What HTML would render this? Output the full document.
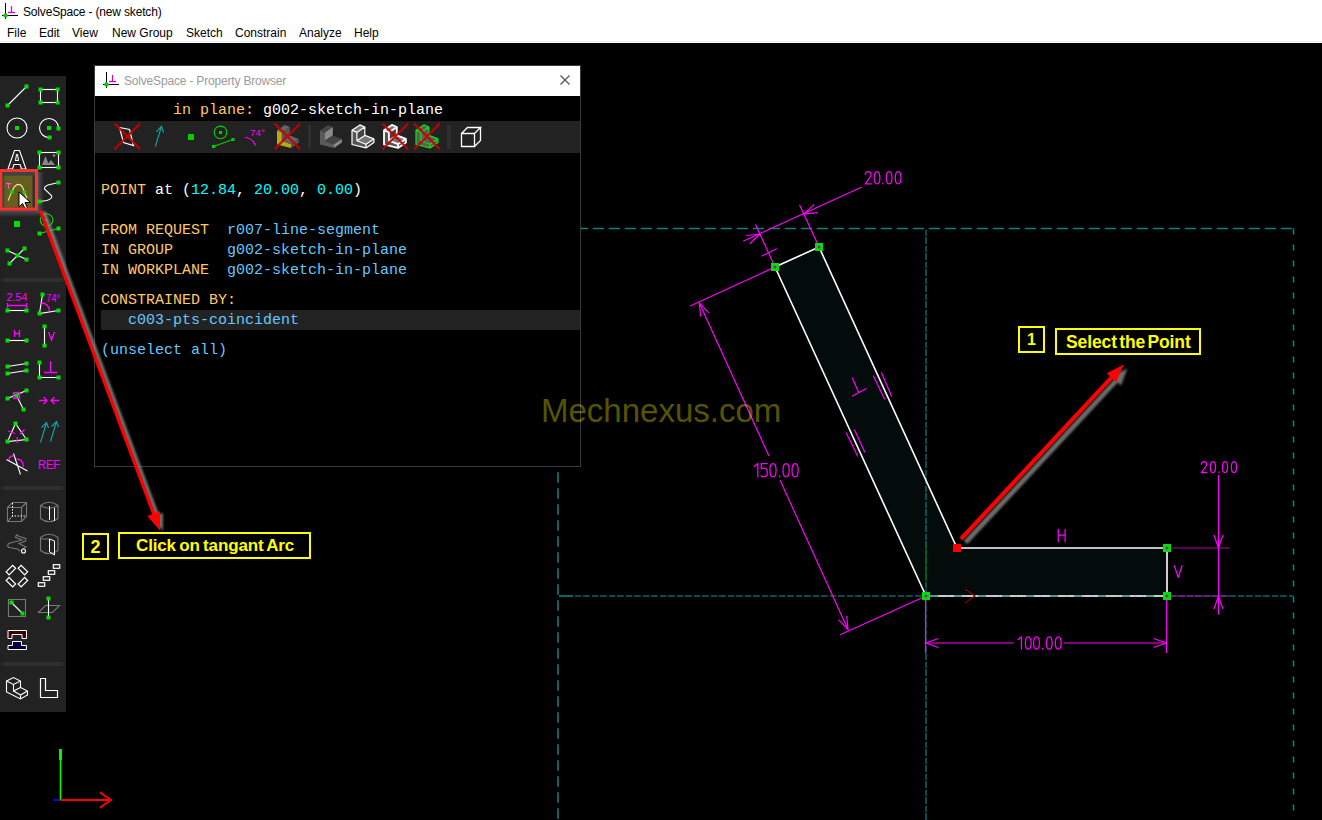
<!DOCTYPE html>
<html><head><meta charset="utf-8">
<style>
html,body{margin:0;padding:0;width:1322px;height:820px;overflow:hidden;background:#000;position:relative;font-family:"Liberation Sans",sans-serif}
.abs{position:absolute}
.menu{position:absolute;top:26px;font-size:12px;color:#000;line-height:14px;white-space:nowrap}
.mono{position:absolute;left:6px;font-family:"Liberation Mono",monospace;font-size:15px;line-height:20px;white-space:pre;color:#fff}
.y{color:#ffc864}.c{color:#00ffff}.l{color:#64c8ff}
svg{position:absolute;overflow:visible}
</style></head><body>

<div class="abs" style="left:0;top:0;width:1322px;height:43px;background:#fff"></div>
<div class="abs" style="left:0;top:41px;width:1322px;height:1px;background:#f0f0f0"></div>
<svg style="left:0px;top:0px" width="20" height="20">
  <line x1="5.5" y1="3" x2="5.5" y2="19" stroke="#000" stroke-width="1"/>
  <line x1="2" y1="15.5" x2="18" y2="15.5" stroke="#000" stroke-width="1"/>
  <line x1="11.5" y1="6" x2="11.5" y2="12" stroke="#d800d8" stroke-width="1.2"/>
  <line x1="8" y1="12.5" x2="15" y2="12.5" stroke="#d800d8" stroke-width="1.4"/>
  <circle cx="5.5" cy="15.5" r="2.2" fill="#00d000"/>
</svg>
<div class="abs" style="left:23px;top:5px;letter-spacing:-0.17px;font-size:12px;line-height:14px;color:#000;white-space:nowrap">SolveSpace - (new sketch)</div>
<div class="menu" style="left:7px">File</div>
<div class="menu" style="left:39px">Edit</div>
<div class="menu" style="left:72px">View</div>
<div class="menu" style="left:112px">New Group</div>
<div class="menu" style="left:186px">Sketch</div>
<div class="menu" style="left:235px">Constrain</div>
<div class="menu" style="left:299px">Analyze</div>
<div class="menu" style="left:354px">Help</div>
<svg style="left:0;top:0" width="1322" height="820">
<polygon points="775,267 819,247 957,548 1167,548 1167,596 926,596" fill="#030b0b"/>
<g stroke="#0e7f7f" fill="none">
<line x1="576.8" y1="228.5" x2="1293.5" y2="228.5" stroke-width="1.6" stroke-dasharray="11.2 4.8"/>
<line x1="1293.5" y1="228.5" x2="1293.5" y2="820" stroke-width="1.6" stroke-dasharray="6 10"/>
<line x1="558" y1="472.3" x2="558" y2="820" stroke-width="1.6" stroke-dasharray="10.5 5.5"/>
<line x1="926" y1="229.8" x2="926" y2="820" stroke-width="1.2" stroke-dasharray="6.3 1 6.8 1.9"/>
<line x1="559" y1="596" x2="573" y2="596" stroke-width="1.6"/>
<line x1="575" y1="596" x2="1293.5" y2="596" stroke-width="1.3" stroke-dasharray="6.3 1.7 6.8 2.2" stroke-opacity="0.8"/>
</g>
<polyline points="926,596 775,267 819,247 957,548 1167,548 1167,596" fill="none" stroke="#fff" stroke-width="1.6"/>
<line x1="926" y1="596" x2="1167" y2="596" stroke="#fff" stroke-width="1.6"/>
<line x1="926" y1="596" x2="1167" y2="596" stroke="#4d9a9a" stroke-width="1.8" stroke-dasharray="8 16" stroke-dashoffset="-4"/>
<line x1="926" y1="545" x2="926" y2="581" stroke="#006400" stroke-width="1.2"/>
<polyline points="965,589 975,596 965,603" fill="none" stroke="#8a0000" stroke-width="1.2"/>
<g stroke="#ff00ff" stroke-width="1.2" fill="none">
<line x1="755.4" y1="224.2" x2="775" y2="267"/>
<line x1="799.5" y1="204.7" x2="819" y2="247"/>
<line x1="743.2" y1="241.2" x2="861.8" y2="187"/>
<polyline points="749.8,243.7 759.8,234.2 746.1,235.5"/>
<polyline points="814.2,204.4 804.2,213.9 817.9,212.6"/>
<line x1="761.4" y1="256.2" x2="776.8" y2="248.8"/>
<line x1="775" y1="267" x2="690.2" y2="306"/>
<line x1="926" y1="596" x2="840" y2="634.8"/>
<line x1="699.3" y1="302.8" x2="768.9" y2="455.8"/>
<line x1="780" y1="480" x2="848" y2="629.6"/>
<polyline points="708.8,312.8 699.3,302.8 700.6,316.5"/>
<polyline points="838.5,619.6 848.0,629.6 846.7,615.9"/>
<line x1="925.5" y1="596" x2="925.5" y2="653"/>
<line x1="1166.5" y1="596" x2="1166.5" y2="653"/>
<line x1="925.5" y1="643" x2="1014" y2="643"/>
<line x1="1064" y1="643" x2="1166.5" y2="643"/>
<polyline points="938.5,638.5 925.5,643.0 938.5,647.5"/>
<polyline points="1153.5,647.5 1166.5,643.0 1153.5,638.5"/>
<line x1="1167" y1="548" x2="1229" y2="548" stroke="#b000b0"/>
<line x1="1167" y1="596" x2="1229" y2="596" stroke="#b000b0"/>
<line x1="1218.5" y1="475" x2="1218.5" y2="614.5"/>
<polyline points="1214.0,535.0 1218.5,548.0 1223.0,535.0"/>
<polyline points="1223.0,609.0 1218.5,596.0 1214.0,609.0"/>
<line x1="852.1" y1="377.4" x2="858.6" y2="392.2"/>
<line x1="852.1" y1="396.2" x2="866.6" y2="388.5"/>
<line x1="873.2" y1="375.4" x2="884.8" y2="399.6"/>
<line x1="881.3" y1="372.3" x2="891.7" y2="396.5"/>
<line x1="846.1" y1="432.5" x2="857.8" y2="456.4"/>
<line x1="854.4" y1="429.5" x2="864.9" y2="452.6"/>
</g>
<g stroke="#ff00ff" stroke-width="1.25" fill="none" stroke-linecap="round" stroke-linejoin="round"><path d="M0,3 C0.3,1.2 1.6,0 3.2,0 C5,0 6.2,1.3 6.2,3.3 C6.2,5.2 4.8,6.6 0,13 L6.4,13" transform="translate(865.20,171.60) scale(0.9462)" vector-effect="non-scaling-stroke"/><path d="M3,0 C1.1,0 0,2.8 0,6.5 C0,10.2 1.1,13 3,13 C4.9,13 6,10.2 6,6.5 C6,2.8 4.9,0 3,0 Z" transform="translate(874.20,171.60) scale(0.9462)" vector-effect="non-scaling-stroke"/><path d="M0.6,12.1 L0.6,13" transform="translate(882.30,171.60) scale(0.9462)" vector-effect="non-scaling-stroke"/><path d="M3,0 C1.1,0 0,2.8 0,6.5 C0,10.2 1.1,13 3,13 C4.9,13 6,10.2 6,6.5 C6,2.8 4.9,0 3,0 Z" transform="translate(886.30,171.60) scale(0.9462)" vector-effect="non-scaling-stroke"/><path d="M3,0 C1.1,0 0,2.8 0,6.5 C0,10.2 1.1,13 3,13 C4.9,13 6,10.2 6,6.5 C6,2.8 4.9,0 3,0 Z" transform="translate(895.30,171.60) scale(0.9462)" vector-effect="non-scaling-stroke"/></g>
<g stroke="#ff00ff" stroke-width="1.25" fill="none" stroke-linecap="round" stroke-linejoin="round"><path d="M0,2.9 L3.4,0 L3.4,13" transform="translate(1018.20,636.80) scale(0.9538)" vector-effect="non-scaling-stroke"/><path d="M3,0 C1.1,0 0,2.8 0,6.5 C0,10.2 1.1,13 3,13 C4.9,13 6,10.2 6,6.5 C6,2.8 4.9,0 3,0 Z" transform="translate(1025.40,636.80) scale(0.9538)" vector-effect="non-scaling-stroke"/><path d="M3,0 C1.1,0 0,2.8 0,6.5 C0,10.2 1.1,13 3,13 C4.9,13 6,10.2 6,6.5 C6,2.8 4.9,0 3,0 Z" transform="translate(1033.60,636.80) scale(0.9538)" vector-effect="non-scaling-stroke"/><path d="M0.6,12.1 L0.6,13" transform="translate(1042.10,636.80) scale(0.9538)" vector-effect="non-scaling-stroke"/><path d="M3,0 C1.1,0 0,2.8 0,6.5 C0,10.2 1.1,13 3,13 C4.9,13 6,10.2 6,6.5 C6,2.8 4.9,0 3,0 Z" transform="translate(1046.40,636.80) scale(0.9538)" vector-effect="non-scaling-stroke"/><path d="M3,0 C1.1,0 0,2.8 0,6.5 C0,10.2 1.1,13 3,13 C4.9,13 6,10.2 6,6.5 C6,2.8 4.9,0 3,0 Z" transform="translate(1055.40,636.80) scale(0.9538)" vector-effect="non-scaling-stroke"/></g>
<g stroke="#ff00ff" stroke-width="1.25" fill="none" stroke-linecap="round" stroke-linejoin="round"><path d="M0,2.9 L3.4,0 L3.4,13" transform="translate(754.30,463.50) scale(1.0308)" vector-effect="non-scaling-stroke"/><path d="M6,0 L0.3,0 L0.3,5.1 C1.3,4.6 2.4,4.4 3.3,4.5 C5,4.8 6.1,6.3 6.1,8.6 C6.1,11.3 4.6,13 2.8,13 C1.7,13 0.7,12.6 0,12.1" transform="translate(761.00,463.50) scale(1.0308)" vector-effect="non-scaling-stroke"/><path d="M3,0 C1.1,0 0,2.8 0,6.5 C0,10.2 1.1,13 3,13 C4.9,13 6,10.2 6,6.5 C6,2.8 4.9,0 3,0 Z" transform="translate(769.90,463.50) scale(1.0308)" vector-effect="non-scaling-stroke"/><path d="M0.6,12.1 L0.6,13" transform="translate(779.00,463.50) scale(1.0308)" vector-effect="non-scaling-stroke"/><path d="M3,0 C1.1,0 0,2.8 0,6.5 C0,10.2 1.1,13 3,13 C4.9,13 6,10.2 6,6.5 C6,2.8 4.9,0 3,0 Z" transform="translate(783.00,463.50) scale(1.0308)" vector-effect="non-scaling-stroke"/><path d="M3,0 C1.1,0 0,2.8 0,6.5 C0,10.2 1.1,13 3,13 C4.9,13 6,10.2 6,6.5 C6,2.8 4.9,0 3,0 Z" transform="translate(792.00,463.50) scale(1.0308)" vector-effect="non-scaling-stroke"/></g>
<g stroke="#ff00ff" stroke-width="1.25" fill="none" stroke-linecap="round" stroke-linejoin="round"><path d="M0,3 C0.3,1.2 1.6,0 3.2,0 C5,0 6.2,1.3 6.2,3.3 C6.2,5.2 4.8,6.6 0,13 L6.4,13" transform="translate(1201.30,461.50) scale(0.8615)" vector-effect="non-scaling-stroke"/><path d="M3,0 C1.1,0 0,2.8 0,6.5 C0,10.2 1.1,13 3,13 C4.9,13 6,10.2 6,6.5 C6,2.8 4.9,0 3,0 Z" transform="translate(1210.30,461.50) scale(0.8615)" vector-effect="non-scaling-stroke"/><path d="M0.6,12.1 L0.6,13" transform="translate(1218.50,461.50) scale(0.8615)" vector-effect="non-scaling-stroke"/><path d="M3,0 C1.1,0 0,2.8 0,6.5 C0,10.2 1.1,13 3,13 C4.9,13 6,10.2 6,6.5 C6,2.8 4.9,0 3,0 Z" transform="translate(1222.40,461.50) scale(0.8615)" vector-effect="non-scaling-stroke"/><path d="M3,0 C1.1,0 0,2.8 0,6.5 C0,10.2 1.1,13 3,13 C4.9,13 6,10.2 6,6.5 C6,2.8 4.9,0 3,0 Z" transform="translate(1231.40,461.50) scale(0.8615)" vector-effect="non-scaling-stroke"/></g>
<g stroke="#ff00ff" stroke-width="1.25" fill="none" stroke-linecap="round" stroke-linejoin="round"><path d="M0.5,0 L0.5,13 M7.8,0 L7.8,13 M0.5,6.2 L7.8,6.2" transform="translate(1057.80,529.30) scale(0.9385)" vector-effect="non-scaling-stroke"/></g>
<g stroke="#ff00ff" stroke-width="1.25" fill="none" stroke-linecap="round" stroke-linejoin="round"><path d="M0,0 L4.3,13 L8.6,0" transform="translate(1174.40,565.80) scale(0.8923)" vector-effect="non-scaling-stroke"/></g>
<rect x="771.0" y="263.0" width="8" height="8" fill="#00e000"/>
<circle cx="775" cy="267" r="1.5" fill="#9a209a"/>
<rect x="815.0" y="243.0" width="8" height="8" fill="#00e000"/>
<circle cx="819" cy="247" r="1.5" fill="#9a209a"/>
<rect x="922.0" y="592.0" width="8" height="8" fill="#00e000"/>
<circle cx="926" cy="596" r="1.5" fill="#9a209a"/>
<rect x="1163.0" y="544.0" width="8" height="8" fill="#00e000"/>
<circle cx="1167" cy="548" r="1.5" fill="#9a209a"/>
<rect x="1163.0" y="592.0" width="8" height="8" fill="#00e000"/>
<circle cx="1167" cy="596" r="1.5" fill="#9a209a"/>
<rect x="953.0" y="544.0" width="8" height="8" fill="#ff0000"/>
</svg>
<div class="abs" style="left:94px;top:65px;width:485px;height:400px;border:1px solid #3a3a3a;background:#000"></div>
<div class="abs" style="left:95px;top:66px;width:485px;height:30px;background:#fff"></div>
<svg style="left:101px;top:69px" width="20" height="20">
  <line x1="5.5" y1="3" x2="5.5" y2="19" stroke="#000" stroke-width="1"/>
  <line x1="2" y1="15.5" x2="18" y2="15.5" stroke="#000" stroke-width="1"/>
  <line x1="11.5" y1="6" x2="11.5" y2="12" stroke="#d800d8" stroke-width="1.2"/>
  <line x1="8" y1="12.5" x2="15" y2="12.5" stroke="#d800d8" stroke-width="1.4"/>
  <circle cx="5.5" cy="15.5" r="2.2" fill="#00d000"/>
</svg>
<div class="abs" style="left:124px;top:74px;letter-spacing:-0.18px;font-size:12px;line-height:14px;color:#9a9a9a;white-space:nowrap">SolveSpace - Property Browser</div>
<svg style="left:0;top:0" width="1322" height="820">
<g stroke="#555" stroke-width="1.2" fill="none"><line x1="560.5" y1="75.5" x2="569.5" y2="84.5"/><line x1="569.5" y1="75.5" x2="560.5" y2="84.5"/></g>
</svg>
<div class="abs" style="left:95px;top:96px;width:485px;height:370px;overflow:hidden">
<div class="mono" style="top:5px"><span class="y">        in plane: </span>g002-sketch-in-plane</div>
<div class="abs" style="left:0;top:25px;width:485px;height:32px;background:#222"></div>
<div class="mono" style="top:85px"><span class="y">POINT</span> at (<span class="c">12.84</span>, <span class="c">20.00</span>, <span class="c">0.00</span>)</div>
<div class="mono" style="top:125px"><span class="y">FROM REQUEST  </span><span class="l">r007-line-segment</span></div>
<div class="mono" style="top:145px"><span class="y">IN GROUP      </span><span class="l">g002-sketch-in-plane</span></div>
<div class="mono" style="top:165px"><span class="y">IN WORKPLANE  </span><span class="l">g002-sketch-in-plane</span></div>
<div class="mono" style="top:195px"><span class="y">CONSTRAINED BY:</span></div>
<div class="abs" style="left:6px;top:214px;width:479px;height:20px;background:#222"></div>
<div class="mono" style="top:215px"><span class="l">   c003-pts-coincident</span></div>
<div class="mono" style="top:245px"><span class="l">(unselect all)</span></div>
</div>
<svg style="left:0;top:0" width="1322" height="820">
<polygon points="119.5,127.5 129.5,129.5 133.5,145.5 123.5,142.5" fill="none" stroke="#fff" stroke-width="1.2"/>
<path d="M114.60000000000001,123.50000000000001 L140.20000000000002,149.10000000000002 M114.60000000000001,149.10000000000002 L140.20000000000002,123.50000000000001" stroke="#c80000" stroke-width="2.2" opacity="0.9" fill="none"/>
<path d="M155.3,146.6 L161.4,126.3 M156.3,131.8 L161.4,126.3 L163.6,132.5" stroke="#10a0a0" stroke-width="1.2" fill="none"/>
<rect x="188" y="134" width="6" height="6" fill="#00d000"/>
<circle cx="220.5" cy="132.4" r="6.3" stroke="#00d000" stroke-width="1.1" fill="none"/><rect x="219" y="131" width="3" height="3" fill="#00d000"/>
<line x1="213.3" y1="146.4" x2="233" y2="139.4" stroke="#00d000" stroke-width="1.1"/><rect x="212" y="145" width="3" height="3" fill="#00d000"/><rect x="231.5" y="138" width="3" height="3" fill="#00d000"/>
<text x="250" y="135.8" font-family="Liberation Sans" font-size="9.5" fill="#ff00ff" textLength="15" lengthAdjust="spacingAndGlyphs">74°</text>
<path d="M245,137.3 Q252,138 255.7,145.6" stroke="#ff00ff" stroke-width="1.1" fill="none"/>
<polygon points="277.0,130.2 281.9,132.4 281.9,140.7 291.0,144.2 291.0,147.9 277.0,144.5" fill="#b8aa10"/><polygon points="277.0,130.2 284.9,124.9 289.8,127.1 281.9,132.4" fill="#666"/><polygon points="281.9,132.4 289.8,127.1 289.8,135.4 281.9,140.7" fill="#555"/><polygon points="281.9,140.7 289.8,135.4 298.9,138.9 291.0,144.2" fill="#666"/><polygon points="291.0,144.2 298.9,138.9 298.9,142.6 291.0,147.9" fill="#555"/>
<path d="M274.59999999999997,123.50000000000001 L300.2,149.10000000000002 M274.59999999999997,149.10000000000002 L300.2,123.50000000000001" stroke="#c80000" stroke-width="2.2" opacity="0.9" fill="none"/>
<rect x="308" y="125" width="3" height="24" fill="#2e2e2e"/>
<polygon points="320.0,130.2 324.9,132.4 324.9,140.7 334.0,144.2 334.0,147.9 320.0,144.5" fill="#5a5a5a"/><polygon points="320.0,130.2 327.9,124.9 332.8,127.1 324.9,132.4" fill="#444"/><polygon points="324.9,132.4 332.8,127.1 332.8,135.4 324.9,140.7" fill="#8a8a8a"/><polygon points="324.9,140.7 332.8,135.4 341.9,138.9 334.0,144.2" fill="#444"/><polygon points="334.0,144.2 341.9,138.9 341.9,142.6 334.0,147.9" fill="#8a8a8a"/>
<polygon points="352.0,130.2 356.9,132.4 356.9,140.7 366.0,144.2 366.0,147.9 352.0,144.5" fill="#555"/><polygon points="352.0,130.2 359.9,124.9 364.8,127.1 356.9,132.4" fill="#777"/><polygon points="356.9,132.4 364.8,127.1 364.8,135.4 356.9,140.7" fill="#444"/><polygon points="356.9,140.7 364.8,135.4 373.9,138.9 366.0,144.2" fill="#777"/><polygon points="366.0,144.2 373.9,138.9 373.9,142.6 366.0,147.9" fill="#444"/><path d="M352.0,130.2 L359.9,124.9 L364.8,127.1 L364.8,135.4 L373.9,138.9 L373.9,142.6 L366.0,147.9 L352.0,144.5 Z M364.8,127.1 L356.9,132.4 M364.8,135.4 L356.9,140.7 M373.9,138.9 L366.0,144.2 M352.0,130.2 L356.9,132.4 L356.9,140.7 L366.0,144.2 L366.0,147.9" stroke="#fff" stroke-width="1.2" fill="none" stroke-linejoin="round"/>
<polygon points="384.0,130.2 388.9,132.4 388.9,140.7 398.0,144.2 398.0,147.9 384.0,144.5" fill="#555"/><polygon points="384.0,130.2 391.9,124.9 396.8,127.1 388.9,132.4" fill="#777"/><polygon points="388.9,132.4 396.8,127.1 396.8,135.4 388.9,140.7" fill="#444"/><polygon points="388.9,140.7 396.8,135.4 405.9,138.9 398.0,144.2" fill="#777"/><polygon points="398.0,144.2 405.9,138.9 405.9,142.6 398.0,147.9" fill="#444"/><path d="M384.0,130.2 L391.9,124.9 L396.8,127.1 L396.8,135.4 L405.9,138.9 L405.9,142.6 L398.0,147.9 L384.0,144.5 Z M396.8,127.1 L388.9,132.4 M396.8,135.4 L388.9,140.7 M405.9,138.9 L398.0,144.2 M384.0,130.2 L388.9,132.4 L388.9,140.7 L398.0,144.2 L398.0,147.9" stroke="#fff" stroke-width="1.8" fill="none" stroke-linejoin="round"/>
<path d="M382.5,123.60000000000001 L408.1,149.20000000000002 M382.5,149.20000000000002 L408.1,123.60000000000001" stroke="#c80000" stroke-width="2.2" opacity="0.9" fill="none"/>
<polygon points="416.0,130.2 420.9,132.4 420.9,140.7 430.0,144.2 430.0,147.9 416.0,144.5" fill="#665566"/><polygon points="416.0,130.2 423.9,124.9 428.8,127.1 420.9,132.4" fill="#665566"/><polygon points="420.9,132.4 428.8,127.1 428.8,135.4 420.9,140.7" fill="#665566"/><polygon points="420.9,140.7 428.8,135.4 437.9,138.9 430.0,144.2" fill="#665566"/><polygon points="430.0,144.2 437.9,138.9 437.9,142.6 430.0,147.9" fill="#665566"/><path d="M416.0,130.2 L423.9,124.9 L428.8,127.1 L428.8,135.4 L437.9,138.9 L437.9,142.6 L430.0,147.9 L416.0,144.5 Z M428.8,127.1 L420.9,132.4 M428.8,135.4 L420.9,140.7 M437.9,138.9 L430.0,144.2 M416.0,130.2 L420.9,132.4 L420.9,140.7 L430.0,144.2 L430.0,147.9" stroke="#00ee00" stroke-width="1.2" fill="none" stroke-linejoin="round"/>
<path d="M414.2,123.60000000000001 L439.8,149.20000000000002 M414.2,149.20000000000002 L439.8,123.60000000000001" stroke="#c80000" stroke-width="2.2" opacity="0.9" fill="none"/>
<rect x="447" y="125" width="4" height="24" fill="#2e2e2e"/>
<path d="M461.5,133.5 L474.5,133.5 L474.5,146.5 L461.5,146.5 Z M461.5,133.5 L467.5,127.5 L480.5,127.5 L474.5,133.5 M480.5,127.5 L480.5,140.5 L474.5,146.5" stroke="#fff" stroke-width="1.3" fill="none"/>
</svg>
<div class="abs" style="left:0;top:76px;width:66px;height:636px;background:#222"></div>
<div class="abs" style="left:3px;top:278px;width:60px;height:4px;background:#2f2f2f"></div>
<div class="abs" style="left:3px;top:486px;width:60px;height:4px;background:#2f2f2f"></div>
<div class="abs" style="left:3px;top:662px;width:60px;height:4px;background:#2f2f2f"></div>
<svg style="left:0;top:0" width="1322" height="820">
<line x1="7.5" y1="105.5" x2="26.5" y2="86.5" stroke="#fff" stroke-width="1.1" fill="none"/><rect x="5.5" y="103.5" width="4" height="4" fill="#00e000"/><rect x="24.5" y="84.5" width="4" height="4" fill="#00e000"/>
<rect x="40.5" y="89.5" width="17" height="13" stroke="#fff" stroke-width="1.1" fill="none"/><rect x="38.5" y="87.5" width="4" height="4" fill="#00e000"/><rect x="55.5" y="87.5" width="4" height="4" fill="#00e000"/><rect x="38.5" y="100.5" width="4" height="4" fill="#00e000"/><rect x="55.5" y="100.5" width="4" height="4" fill="#00e000"/>
<circle cx="17" cy="128" r="10" stroke="#fff" stroke-width="1.1" fill="none"/><rect x="15.0" y="126.0" width="4" height="4" fill="#00e000"/>
<path d="M58.5,128 A9.5,9.5 0 1 0 49.5,137.5" stroke="#fff" stroke-width="1.1" fill="none"/><rect x="47.0" y="126.0" width="4" height="4" fill="#00e000"/><rect x="56.5" y="126.5" width="4" height="4" fill="#00e000"/><rect x="47.5" y="135.5" width="4" height="4" fill="#00e000"/>
<path d="M8,169 L14.5,150.5 L19.5,150.5 L26,169 L21.5,169 L20,164.5 L14,164.5 L12.5,169 Z M15.5,160.5 L18.5,160.5 L17.5,154.5 L16.5,154.5 Z" stroke="#fff" stroke-width="1.1" fill="none" stroke-linejoin="round"/>
<rect x="39.5" y="152.5" width="19" height="15" stroke="#fff" stroke-width="1.1" fill="none"/><path d="M42,165 L45.5,156 L49,165 Z M47,165 L51,160 L55,165 Z" fill="#888"/><circle cx="54" cy="155.5" r="1.3" fill="#888"/><rect x="37.5" y="150.5" width="4" height="4" fill="#00e000"/><rect x="56.5" y="150.5" width="4" height="4" fill="#00e000"/><rect x="37.5" y="165.5" width="4" height="4" fill="#00e000"/><rect x="56.5" y="165.5" width="4" height="4" fill="#00e000"/>
<defs><linearGradient id="shr" x1="0" y1="0" x2="1" y2="0"><stop offset="0" stop-color="#4a5050"/><stop offset="1" stop-color="#222"/></linearGradient><linearGradient id="shb" x1="0" y1="0" x2="0" y2="1"><stop offset="0" stop-color="#4a5050"/><stop offset="1" stop-color="#222"/></linearGradient></defs>
<rect x="38" y="172" width="6" height="44" fill="url(#shr)"/>
<rect x="0" y="211" width="44" height="6" fill="url(#shb)"/>
<rect x="2" y="172" width="33" height="36" fill="#2c3131"/>
<rect x="2" y="172" width="33" height="3.5" fill="#3c4343"/>
<rect x="4" y="175.5" width="28.5" height="32" fill="#655e1e"/>
<rect x="2" y="175.5" width="2.5" height="32" fill="#444a3a"/>
<path d="M8.2,200.6 Q10,195 12,191.7 Q14.5,184.4 18.4,184.4 Q22.5,184.4 24.4,192.3 Q26,196 27,198.3" stroke="#f0eca0" stroke-width="1.1" fill="none"/>
<path d="M6,183.6 L11.1,183.6 M8.55,183.6 L8.55,188.8" stroke="#ff55bb" stroke-width="1.1" fill="none"/>
<rect x="10.35" y="190.04999999999998" width="3.3" height="3.3" fill="#00e000"/><rect x="22.75" y="190.65" width="3.3" height="3.3" fill="#00e000"/>
<path d="M19,192 L19,207 L22.5,203.5 L25.3,209 L27.5,208 L25,202.5 L30.5,202.5 Z" fill="#fff" stroke="#000" stroke-width="1"/>
<path d="M0,168.9 L38,168.9 L38,210.7 L0,210.7 Z M2.2,172 L2.2,207.5 L34.9,207.5 L34.9,172 Z" fill="#ff3030" fill-rule="evenodd"/>
<path d="M39.5,201.5 L47,200.5 Q53,198.5 51.5,195.5 L44.5,189 Q44,186.5 48,185 L58.5,182.5" stroke="#fff" stroke-width="1.1" fill="none"/><rect x="37.5" y="199.5" width="4" height="4" fill="#00e000"/><rect x="56.5" y="180.5" width="4" height="4" fill="#00e000"/>
<rect x="14.0" y="221.0" width="6" height="6" fill="#00e000"/>
<circle cx="46.5" cy="220" r="6.3" stroke="#00e000" stroke-width="1.1" fill="none"/><rect x="45.5" y="219.0" width="2" height="2" fill="#00e000"/><line x1="39.5" y1="233.5" x2="58.5" y2="228.5" stroke="#00e000" stroke-width="1.1"/><rect x="37.5" y="231.5" width="4" height="4" fill="#00e000"/><rect x="56.5" y="226.5" width="4" height="4" fill="#00e000"/>
<line x1="7.5" y1="250.5" x2="26.5" y2="259.5" stroke="#fff" stroke-width="1.1" fill="none"/><line x1="9.5" y1="263.5" x2="24.5" y2="248.5" stroke="#fff" stroke-width="1.1" fill="none"/><rect x="5.5" y="248.5" width="4" height="4" fill="#00e000"/><rect x="24.5" y="257.5" width="4" height="4" fill="#00e000"/><rect x="7.5" y="261.5" width="4" height="4" fill="#00e000"/><rect x="22.5" y="246.5" width="4" height="4" fill="#00e000"/><rect x="15.5" y="253.5" width="4" height="4" fill="#00e000"/>
<line x1="7.5" y1="310.5" x2="26.5" y2="310.5" stroke="#fff" stroke-width="1.1" fill="none"/><rect x="5.5" y="308.5" width="4" height="4" fill="#00e000"/><rect x="24.5" y="308.5" width="4" height="4" fill="#00e000"/>
<path d="M7.5,303 L7.5,308 M7.5,305.5 L26.5,305.5 M26.5,303 L26.5,308" stroke="#ff00ff" stroke-width="1.3" fill="none"/>
<text x="6.5" y="301" font-family="Liberation Sans" font-size="10" fill="#ff00ff" textLength="21" lengthAdjust="spacingAndGlyphs">2.54</text>
<path d="M42.5,294.5 L39.5,313.5 L58.5,310.5" stroke="#fff" stroke-width="1.1" fill="none"/><rect x="40.5" y="292.5" width="4" height="4" fill="#00e000"/><rect x="37.5" y="311.5" width="4" height="4" fill="#00e000"/><rect x="56.5" y="308.5" width="4" height="4" fill="#00e000"/>
<path d="M41.5,303 Q48.5,303 49.5,311" stroke="#ff00ff" stroke-width="1.3" fill="none"/>
<text x="46" y="302" font-family="Liberation Sans" font-size="10" fill="#ff00ff" textLength="14" lengthAdjust="spacingAndGlyphs">74°</text>
<line x1="7.5" y1="340.5" x2="26.5" y2="340.5" stroke="#fff" stroke-width="1.1" fill="none"/><rect x="5.5" y="338.5" width="4" height="4" fill="#00e000"/><rect x="24.5" y="338.5" width="4" height="4" fill="#00e000"/>
<path d="M14.5,330 L14.5,337 M19.5,330 L19.5,337 M14.5,333.5 L19.5,333.5" stroke="#ff00ff" stroke-width="1.3" fill="none"/>
<line x1="44.5" y1="326.5" x2="44.5" y2="345.5" stroke="#fff" stroke-width="1.1" fill="none"/><rect x="42.5" y="324.5" width="4" height="4" fill="#00e000"/><rect x="42.5" y="343.5" width="4" height="4" fill="#00e000"/>
<path d="M48.5,332 L51.5,340 L54.5,332" stroke="#ff00ff" stroke-width="1.3" fill="none"/>
<path d="M7.5,366.5 L26.5,363.5 M7.5,373.5 L26.5,370.5" stroke="#fff" stroke-width="1.1" fill="none"/><rect x="5.5" y="364.5" width="4" height="4" fill="#00e000"/><rect x="24.5" y="361.5" width="4" height="4" fill="#00e000"/><rect x="5.5" y="371.5" width="4" height="4" fill="#00e000"/><rect x="24.5" y="368.5" width="4" height="4" fill="#00e000"/>
<path d="M39.5,362.5 L39.5,377.5 L58.5,377.5" stroke="#fff" stroke-width="1.1" fill="none"/><rect x="37.5" y="360.5" width="4" height="4" fill="#00e000"/><rect x="37.5" y="375.5" width="4" height="4" fill="#00e000"/><rect x="56.5" y="375.5" width="4" height="4" fill="#00e000"/>
<path d="M50.5,361 L50.5,372.5 M44,372.5 L57,372.5" stroke="#ff00ff" stroke-width="1.3" fill="none"/>
<path d="M7.5,398.5 L26.5,390.5 M16.5,395.5 L23.5,409.5" stroke="#fff" stroke-width="1.1" fill="none"/><rect x="5.5" y="396.5" width="4" height="4" fill="#00e000"/><rect x="24.5" y="388.5" width="4" height="4" fill="#00e000"/><rect x="14.5" y="393.5" width="4" height="4" fill="#00e000"/><rect x="21.5" y="407.5" width="4" height="4" fill="#00e000"/>
<rect x="13.5" y="392.5" width="6" height="6" stroke="#ff00ff" stroke-width="1.3" fill="none"/>
<path d="M39,400.5 L47,400.5 M43.5,397 L47,400.5 L43.5,404 M51,400.5 L59,400.5 M54.5,397 L51,400.5 L54.5,404" stroke="#ff00ff" stroke-width="1.3" fill="none"/>
<path d="M15.5,423.5 L7.5,441.5 L26.5,439.5 Z" stroke="#fff" stroke-width="1.1" fill="none"/><rect x="13.5" y="421.5" width="4" height="4" fill="#00e000"/><rect x="5.5" y="439.5" width="4" height="4" fill="#00e000"/><rect x="24.5" y="437.5" width="4" height="4" fill="#00e000"/>
<path d="M8,431 L15,433.5 M20,434 L24.5,429.5 M17,437 L17.5,443" stroke="#ff00ff" stroke-width="1.3" fill="none"/>
<path d="M40.5,442.5 L46.5,422.5 M41.5,427.5 L46.5,422.5 L48.5,428 M50.5,441.5 L56.5,421.5 M51.5,426.5 L56.5,421.5 L58.5,427" stroke="#0f9f9f" stroke-width="1.2" fill="none"/>
<path d="M6.5,459.5 L27.5,471 M13.5,453.5 L20.5,474.5" stroke="#fff" stroke-width="1.1" fill="none"/>
<path d="M9,460 Q9,456 13,456 M16.5,459 Q23,459 23.5,467" stroke="#ff00ff" stroke-width="1.3" fill="none"/>
<text x="38" y="469.3" font-family="Liberation Sans" font-size="13" fill="#ff00ff" textLength="22" lengthAdjust="spacingAndGlyphs">REF</text>
<path d="M7.5,507.5 L12.5,502.5 L26.5,502.5 L26.5,516.5 L21.5,521.5 L7.5,521.5 Z M7.5,507.5 L21.5,507.5 L21.5,521.5 M21.5,507.5 L26.5,502.5" stroke="#777" stroke-width="1.1" fill="none"/>
<path d="M12.5,503 L12.5,516 L26,516 M12.5,516 L8,521" stroke="#fff" stroke-width="1" stroke-dasharray="1.5 1.5" fill="none"/>
<path d="M40.5,505.5 Q49,499 58,505.5 L58,518.5 Q49,525 40.5,518.5 Z M40.5,505.5 Q49,511 58,505.5" stroke="#777" stroke-width="1.1" fill="none"/>
<path d="M49.5,506 L49.5,520 M54.5,508 L54.5,521" stroke="#fff" stroke-width="1" fill="none"/>
<path d="M16.5,534.5 L19,536.5 L26,538.5 L25.5,541 L19,543.5 L26,547 L22,549.5 M16.5,534.5 L15.5,537.5 L22,540 L8.5,543.5 L7.5,546 L9,547.5 L17.5,549 L20,551" stroke="#777" stroke-width="1.1" fill="none"/>
<circle cx="23.5" cy="551" r="2" stroke="#fff" stroke-width="1.1" fill="none"/>
<path d="M40.5,537.5 Q49,531 58,537.5 L58,550.5 Q49,557 40.5,550.5 Z M40.5,539 L49,539" stroke="#777" stroke-width="1.1" fill="none"/>
<path d="M49.5,539 L49.5,552 L54.5,555 L54.5,541 Z" stroke="#fff" stroke-width="1" fill="none"/>
<rect x="6.300000000000001" y="568.0" width="9.2" height="4.2" transform="rotate(-45 10.9 570.1)" stroke="#fff" stroke-width="1.2" fill="none"/>
<rect x="18.299999999999997" y="568.0" width="9.2" height="4.2" transform="rotate(45 22.9 570.1)" stroke="#fff" stroke-width="1.2" fill="none"/>
<rect x="6.300000000000001" y="580.1" width="9.2" height="4.2" transform="rotate(45 10.9 582.2)" stroke="#fff" stroke-width="1.2" fill="none"/>
<rect x="18.299999999999997" y="580.1" width="9.2" height="4.2" transform="rotate(-45 22.9 582.2)" stroke="#fff" stroke-width="1.2" fill="none"/>
<rect x="38.3" y="582.7" width="6.4" height="3.6" stroke="#fff" stroke-width="1.2" fill="none"/>
<rect x="43.3" y="576.7" width="6.4" height="3.6" stroke="#fff" stroke-width="1.2" fill="none"/>
<rect x="48.3" y="570.7" width="6.4" height="3.6" stroke="#fff" stroke-width="1.2" fill="none"/>
<rect x="53.3" y="564.7" width="6.4" height="3.6" stroke="#fff" stroke-width="1.2" fill="none"/>
<rect x="8.5" y="599.5" width="17" height="17" stroke="#777" stroke-width="1.1" fill="none"/><line x1="11.5" y1="602.5" x2="22.5" y2="613.5" stroke="#fff" stroke-width="1.1" fill="none"/><rect x="9.5" y="600.5" width="4" height="4" fill="#00e000"/><rect x="20.5" y="611.5" width="4" height="4" fill="#00e000"/>
<path d="M38.5,612.5 L45.5,605.5 L59.5,605.5 L52.5,612.5 Z" stroke="#777" stroke-width="1.1" fill="none"/><line x1="48.5" y1="598.5" x2="48.5" y2="617.5" stroke="#fff" stroke-width="1.1" fill="none"/><rect x="46.5" y="596.5" width="4" height="4" fill="#00e000"/><rect x="46.5" y="615.5" width="4" height="4" fill="#00e000"/>
<path d="M8,630.5 L26.5,630.5 L26.5,638.5 L22,638.5 L22,634.5 L12,634.5 L12,638.5 L8,638.5 Z" fill="#400000" stroke="#fff" stroke-width="1"/>
<path d="M12.5,641.5 L21.5,641.5 L21.5,645.5 L26.5,645.5 L26.5,649.5 L8,649.5 L8,645.5 L12.5,645.5 Z" fill="#000040" stroke="#fff" stroke-width="1"/>
<path d="M6.5,681 L13.5,677.5 L20.5,681 L20.5,687.5 L27.5,691 L27.5,695 L20.5,699 L6.5,692 Z M6.5,681 L13.5,684.5 L20.5,681 M13.5,684.5 L13.5,691 L20.5,687.5 M13.5,691 L20.5,695 L27.5,691 M20.5,695 L20.5,699" stroke="#fff" stroke-width="1.1" fill="none"/>
<path d="M40.5,678.5 L45.5,678.5 L45.5,690.5 L57.5,690.5 L57.5,697.5 L40.5,697.5 Z" stroke="#fff" stroke-width="1.2" fill="none"/>
</svg>
<svg style="left:0;top:0" width="1322" height="820">
<line x1="53" y1="800" x2="60.5" y2="800" stroke="#0000ff" stroke-width="2"/>
<line x1="60.5" y1="800" x2="60.5" y2="749" stroke="#00ff00" stroke-width="1.6"/>
<line x1="60.5" y1="760" x2="60.5" y2="749" stroke="#00ff00" stroke-width="2.8"/>
<line x1="60.5" y1="800" x2="111" y2="800" stroke="#ff0000" stroke-width="2"/>
<polyline points="100,792.5 111,800 100,807.5" stroke="#ff0000" stroke-width="2" fill="none"/>
</svg>
<svg style="left:0;top:0" width="1322" height="820">
<defs><linearGradient id="sh" x1="0" y1="0" x2="1" y2="0"><stop offset="0" stop-color="#777"/><stop offset="1" stop-color="#000" stop-opacity="0"/></linearGradient></defs>
<defs><filter id="blur" x="-20%" y="-20%" width="140%" height="140%"><feGaussianBlur stdDeviation="1.3"/></filter></defs>
<polygon points="41.4,212.8 154.9,515.9 150.9,517.4 163.0,531.0 163.1,512.8 159.1,514.3 45.6,211.2" fill="#8a8a8a" opacity="0.8" filter="url(#blur)"/>
<polygon points="967.3,544.2 1117.7,382.6 1121.0,385.7 1127.5,368.5 1110.8,376.2 1114.1,379.2 963.7,540.8" fill="#8a8a8a" opacity="0.8" filter="url(#blur)"/>
<polygon points="38.5,210.6 152.1,514.2 147.3,516.0 160.0,530.5 160.1,511.3 155.2,513.1 41.5,209.4" fill="#ff0000"/>
<polygon points="962.5,540.4 1113.0,379.1 1116.2,382.1 1123.7,364.5 1106.7,373.2 1109.9,376.2 959.5,537.6" fill="#ff0000"/>
<rect x="1019" y="327" width="25" height="25" fill="none" stroke="#ffff00" stroke-width="2"/>
<rect x="1056" y="329" width="144" height="25" fill="none" stroke="#ffff00" stroke-width="2"/>
<rect x="83" y="534" width="25" height="25" fill="none" stroke="#ffff00" stroke-width="2"/>
<rect x="119" y="533" width="191" height="25" fill="none" stroke="#ffff00" stroke-width="2"/>
</svg>
<div class="abs" style="left:1027px;top:330px;font:bold 16px/20px 'Liberation Sans';color:#ff0;white-space:nowrap">1</div>
<div class="abs" style="left:1066px;top:332px;font:bold 17.5px/20px 'Liberation Sans';letter-spacing:-0.1px;word-spacing:-2.5px;color:#ff0;white-space:nowrap">Select the Point</div>
<div class="abs" style="left:90.5px;top:537px;font:bold 18px/20px 'Liberation Sans';color:#ff0;white-space:nowrap">2</div>
<div class="abs" style="left:136px;top:536px;font:bold 17px/20px 'Liberation Sans';letter-spacing:-0.15px;word-spacing:-1.2px;color:#ff0;white-space:nowrap">Click on tangant Arc</div>
<div class="abs" style="left:541px;top:391px;font:33px/40px 'Liberation Sans';color:rgba(255,247,0,0.35);white-space:nowrap">Mechnexus.com</div>
</body></html>
